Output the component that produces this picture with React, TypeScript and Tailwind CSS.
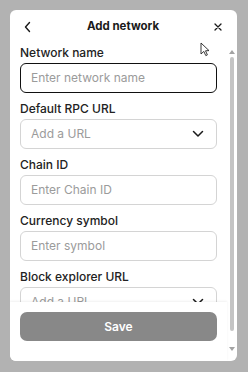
import React from 'react';

const fields = [
  { label: 'Network name', placeholder: 'Enter network name', active: true },
  { label: 'Default RPC URL', placeholder: 'Add a URL', select: true },
  { label: 'Chain ID', placeholder: 'Enter Chain ID' },
  { label: 'Currency symbol', placeholder: 'Enter symbol' },
  { label: 'Block explorer URL', placeholder: 'Add a URL', select: true },
];

function Chevron() {
  return (
    <svg width="12" height="8" viewBox="0 0 12 8" fill="none">
      <path d="M1.5 1.5L6 6L10.5 1.5" stroke="#1a1a1a" strokeWidth="1.5" strokeLinecap="round" strokeLinejoin="round" />
    </svg>
  );
}

export default function App() {
  return (
    <div className="relative h-[372px] w-[248px] overflow-hidden bg-[#b2b2b2] pl-[10px] pt-[10px] font-['Inter',sans-serif]">
      {/* Modal */}
      <div className="flex h-[351px] w-[227px] flex-col overflow-hidden rounded-[6px] bg-white">
        {/* Header */}
        <div className="flex h-[32px] shrink-0 items-center justify-between pl-[13px] pr-[14px] pt-[2px]">
          <svg width="10" height="12" viewBox="0 0 10 12" fill="none">
            <path d="M6.5 1.5L2.5 6L6.5 10.5" stroke="#1a1a1a" strokeWidth="1.4" strokeLinecap="round" strokeLinejoin="round" />
          </svg>
          <span className="text-[11.5px] font-bold text-[#1a1a1a]">Add network</span>
          <svg width="10" height="10" viewBox="0 0 10 10" fill="none">
            <path d="M2 2L8 8M8 2L2 8" stroke="#1a1a1a" strokeWidth="1.3" strokeLinecap="round" />
          </svg>
        </div>

        <div className="flex min-h-0 flex-1">
          <div className="flex w-[217px] flex-col">
            {/* Form */}
            <div className="flex min-h-0 flex-1 flex-col gap-[8px] overflow-hidden pl-[10px] pt-[3px]">
              {fields.map((f) => (
                <div key={f.label} className="flex w-[197px] shrink-0 flex-col gap-[2px]">
                  <span className="text-[12px] leading-[16px] font-medium text-[#222]">{f.label}</span>
                  <div
                    className={`flex h-[30px] items-center justify-between rounded-[6px] pl-[10px] pr-[12px] ${
                      f.active ? 'border-[1.5px] border-[#111]' : 'border border-[#d4d4d4]'
                    }`}
                  >
                    <span className="text-[12px] text-[#9b9b9b]">{f.placeholder}</span>
                    {f.select && <Chevron />}
                  </div>
                </div>
              ))}
            </div>

            {/* Footer */}
            <div className="shrink-0 bg-white pb-[20px] pl-[10px] pt-[10px] shadow-[0_-1px_2px_rgba(0,0,0,0.06)]">
              <div className="flex h-[29px] w-[197px] items-center justify-center rounded-[7px] bg-[#888888]">
                <span className="text-[12px] font-semibold text-white">Save</span>
              </div>
            </div>
          </div>

          {/* Scrollbar */}
          <div className="flex w-[10px] flex-col items-center pb-[10px] pt-[8px]">
            <div className="h-0 w-0 border-x-[3px] border-b-[4px] border-x-transparent border-b-[#a3a3a3]" />
            <div className="mt-[3px] h-[274px] w-[4px] rounded-full bg-[#c4c4c4]" />
            <div className="flex-1" />
            <div className="h-0 w-0 border-x-[3px] border-t-[4px] border-x-transparent border-t-[#a3a3a3]" />
          </div>
        </div>
      </div>

      {/* Mouse cursor */}
      <svg className="absolute left-[200px] top-[42px]" width="10" height="15" viewBox="0 0 10 15" fill="none">
        <path d="M1 1L1 12L3.8 9.4L5.8 13.6L7.4 12.9L5.5 8.8L9 8.6Z" fill="white" stroke="#222" strokeWidth="0.9" strokeLinejoin="round" />
      </svg>
    </div>
  );
}
